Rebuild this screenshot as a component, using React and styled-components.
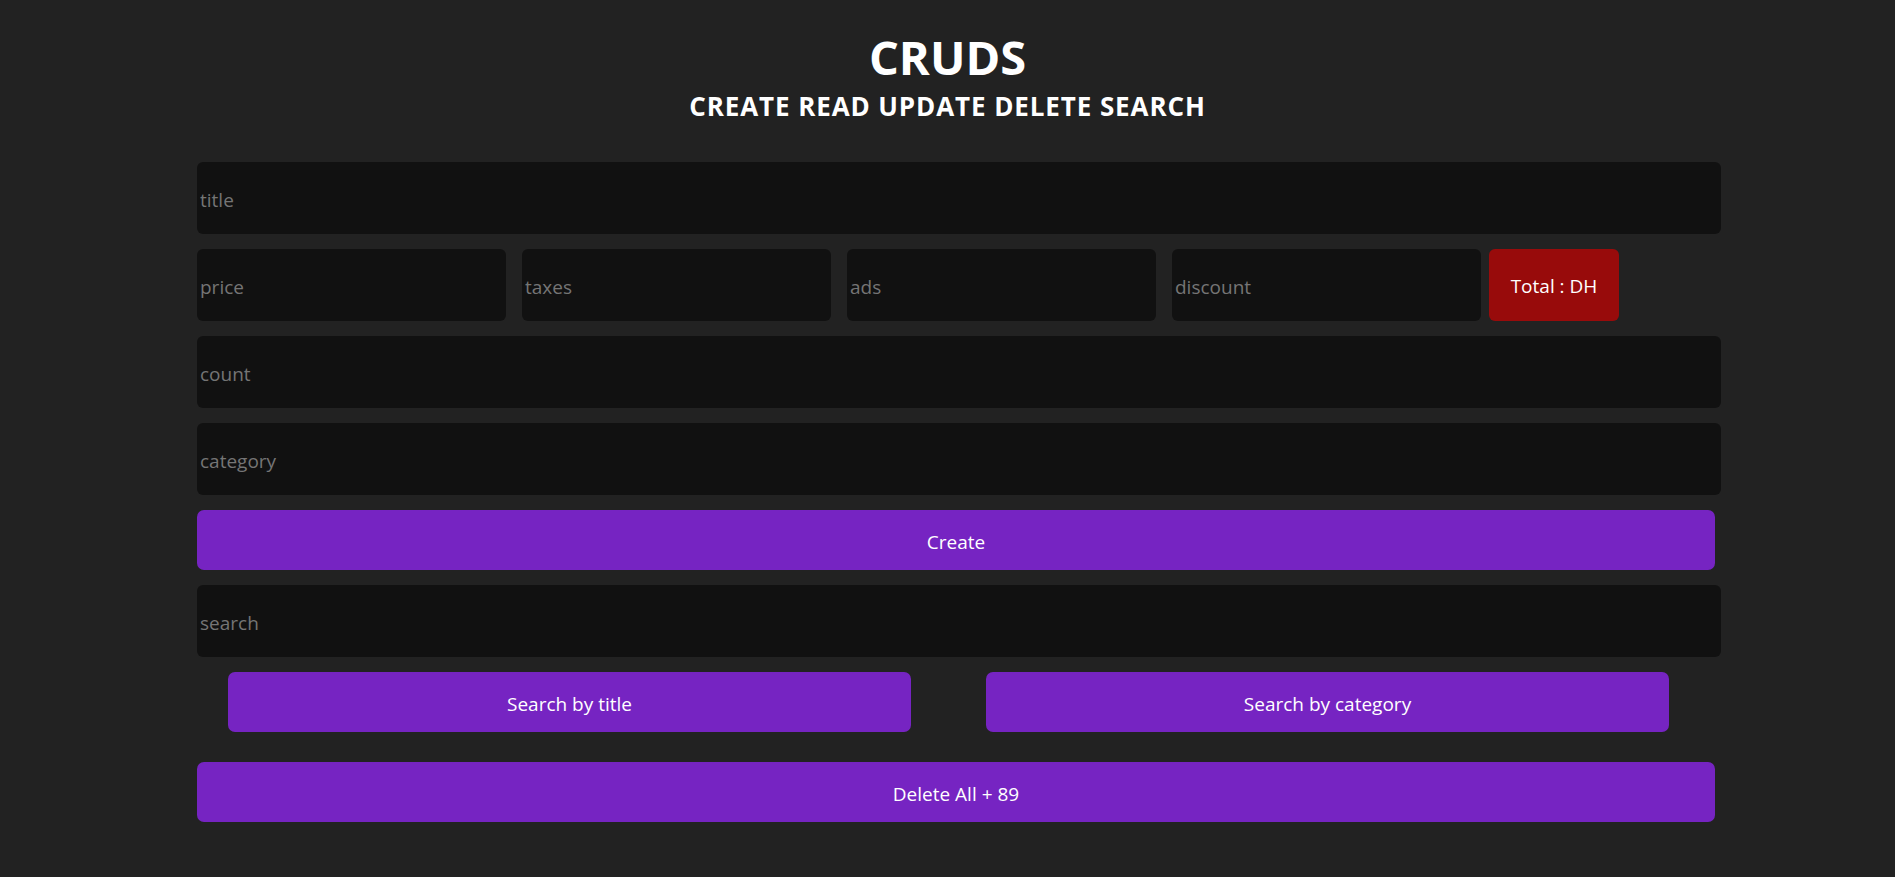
import React from 'react';
import styled, { createGlobalStyle } from 'styled-components';

const GlobalStyle = createGlobalStyle`
  * {
    box-sizing: border-box;
  }
  body {
    margin: 0;
    background-color: #222222;
    font-family: 'Open Sans', 'Noto Sans', sans-serif;
    color: #fff;
  }
`;

const Page = styled.div`
  min-height: 877px;
  padding-top: 29px;
`;

const Head = styled.div`
  text-align: center;
  margin-bottom: 40px;
`;

const Title = styled.h1`
  margin: 0;
  font-size: 47px;
  line-height: 56px;
  font-weight: 700;
`;

const Subtitle = styled.h2`
  margin: 5px 0 0;
  font-size: 26px;
  line-height: 32px;
  font-weight: 700;
  letter-spacing: 0.9px;
`;

const Crud = styled.div`
  display: flex;
  flex-direction: column;
  gap: 15px;
  margin: 0 174px 0 197px;
`;

const Input = styled.input`
  width: ${(props) => (props.$small ? '309px' : '100%')};
  height: 72px;
  border: none;
  outline: none;
  border-radius: 6px;
  background-color: #111111;
  color: #fff;
  padding: 3px 3px 0;
  font-family: inherit;
  font-size: 19px;
  margin-right: ${(props) => props.$gap || 0}px;
  &::placeholder {
    color: #757575;
  }
`;

const Row = styled.div`
  display: flex;
  align-items: stretch;
`;

const Total = styled.small`
  display: flex;
  align-items: center;
  justify-content: center;
  width: 130px;
  padding-top: 2px;
  border-radius: 6px;
  background-color: #980b0b;
  font-size: 19px;
`;

const Button = styled.button`
  width: ${(props) => (props.$full ? 'calc(100% - 6px)' : 'auto')};
  flex: ${(props) => (props.$full ? 'none' : '1')};
  height: 60px;
  border: none;
  border-radius: 7px;
  background-color: #7624c2;
  color: #fff;
  padding: 3px 0 0;
  font-family: inherit;
  font-size: 19px;
  cursor: pointer;
  margin-top: ${(props) => props.$offset || 0}px;
`;

const SearchRow = styled.div`
  display: flex;
  gap: 75px;
  padding: 0 52px 0 31px;
`;

const App = () => {
  return (
    <Page>
      <GlobalStyle />
      <Head>
        <Title>CRUDS</Title>
        <Subtitle>CREATE READ UPDATE DELETE SEARCH</Subtitle>
      </Head>
      <Crud>
        <Input type="text" placeholder="title" />
        <Row>
          <Input $small $gap={16} type="number" placeholder="price" />
          <Input $small $gap={16} type="number" placeholder="taxes" />
          <Input $small $gap={16} type="number" placeholder="ads" />
          <Input $small $gap={8} type="number" placeholder="discount" />
          <Total>Total : DH</Total>
        </Row>
        <Input type="number" placeholder="count" />
        <Input type="text" placeholder="category" />
        <Button $full>Create</Button>
        <Input type="text" placeholder="search" />
        <SearchRow>
          <Button>Search by title</Button>
          <Button>Search by category</Button>
        </SearchRow>
        <Button $full $offset={15}>
          Delete All + 89
        </Button>
      </Crud>
    </Page>
  );
};

export default App;
